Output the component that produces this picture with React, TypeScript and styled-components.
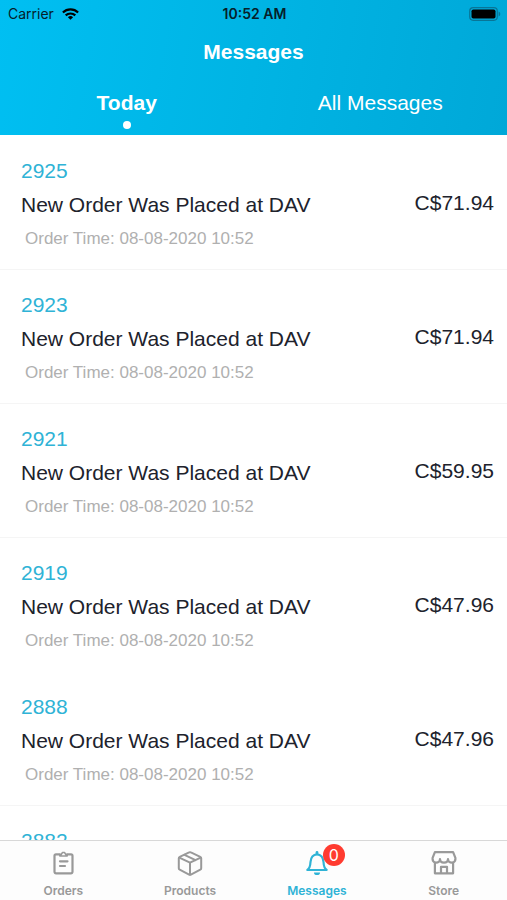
import React from "react";
import styled, { createGlobalStyle } from "styled-components";

const GlobalStyle = createGlobalStyle`
  * { box-sizing: border-box; }
  body { margin: 0; background: #fff; font-family: "Liberation Sans", Arial, sans-serif; }
  button { font: inherit; color: inherit; background: none; border: 0; padding: 0; cursor: pointer; }
  h1, h2, p, ul { margin: 0; padding: 0; font-weight: 400; }
`;

const Screen = styled.div`
  display: flex;
  flex-direction: column;
  height: 100vh;
`;

const Header = styled.header`
  flex: none;
  background: linear-gradient(100deg, #00bff2 0%, #00b4e4 50%, #00a8d8 100%);
  color: #fff;
`;

const StatusBar = styled.div`
  display: grid;
  grid-template-columns: 1fr auto 1fr;
  align-items: center;
  height: 28px;
  padding: 0 6px 0 8px;
  color: #06202a;
  font: 400 14px/28px Inter, sans-serif;
`;

const Carrier = styled.div`
  display: flex;
  align-items: center;
  gap: 8px;
`;

const Clock = styled.div`
  font-weight: 600;
`;

const Battery = styled.div`
  display: flex;
  justify-content: flex-end;
`;

const Title = styled.h1`
  height: 48px;
  font-size: 21px;
  font-weight: 700;
  line-height: 48px;
  text-align: center;
`;

const Tabs = styled.div`
  display: grid;
  grid-template-columns: 1fr 1fr;
  height: 59px;
`;

const Tab = styled.button<{ $active?: boolean }>`
  && {
    display: flex;
    flex-direction: column;
    align-items: center;
    padding-top: 13px;
    font-size: 21px;
    font-weight: ${(p) => (p.$active ? 700 : 400)};
    line-height: 28px;
  }
  &::after {
    content: "";
    width: 8px;
    height: 8px;
    margin-top: 4px;
    border-radius: 50%;
    background: ${(p) => (p.$active ? "#fff" : "transparent")};
  }
`;

const List = styled.ul`
  && {
    padding-top: 1px;
  }
  flex: 1;
  min-height: 0;
  overflow-y: auto;
  scrollbar-width: none;
  list-style: none;
`;

const Row = styled.li<{ $divided: boolean }>`
  display: flex;
  align-items: center;
  justify-content: space-between;
  height: 134px;
  padding: 5px 13px 0 21px;
  border-bottom: 1px solid ${(p) => (p.$divided ? "#f5f5f5" : "transparent")};
`;

const OrderNumber = styled.h2`
  color: #2fb3d6;
  font-size: 21px;
  line-height: 34px;
`;

const Summary = styled.p`
  color: #20222c;
  font-size: 21px;
  line-height: 34px;
`;

const OrderTime = styled.p`
  && {
    padding-left: 4px;
  }
  color: #b0b0b0;
  font-size: 17px;
  line-height: 34px;
`;

const Price = styled.div`
  padding-bottom: 4px;
  color: #20222c;
  font-size: 21px;
  line-height: 34px;
`;

const TabBar = styled.nav`
  flex: none;
  display: grid;
  grid-template-columns: repeat(4, 1fr);
  height: 60px;
  border-top: 1px solid #d8d8d8;
  background: #fdfdfd;
`;

const NavItem = styled.button<{ $active?: boolean }>`
  && {
    display: flex;
    flex-direction: column;
    align-items: center;
    padding-top: 8px;
    color: ${(p) => (p.$active ? "#2fb3d6" : "#999")};
    font: 600 12px/16px Inter, sans-serif;
  }
`;

const IconBox = styled.span`
  position: relative;
  display: flex;
  width: 28px;
  height: 28px;
  margin-bottom: 6px;
`;

const Badge = styled.span`
  position: absolute;
  top: -5px;
  left: 20px;
  width: 22px;
  height: 22px;
  border-radius: 50%;
  background: #ff3b30;
  color: #fff;
  font: 400 16px/22px Inter, sans-serif;
  text-align: center;
`;

const Glyph = ({ children }: { children: React.ReactNode }) => (
  <svg width="28" height="28" viewBox="0 0 28 28" fill="none" stroke="currentColor" strokeWidth="2.2" strokeLinecap="round" strokeLinejoin="round" aria-hidden="true">
    {children}
  </svg>
);

const OrdersIcon = () => (
  <Glyph>
    <path d="M10.800 5.300H7A1.500 1.500 0 0 0 5.500 6.800v16A1.500 1.500 0 0 0 7 24.300h15a1.500 1.500 0 0 0 1.500-1.500v-16A1.500 1.500 0 0 0 22 5.300h-3.800" />
    <path d="M10.800 5.500h1.400l1.300-2h2l1.300 2h1.400v1.500h-7.400z" strokeWidth="1.500" />
    <path d="M11 12.300h7.500M11 17h5" />
  </Glyph>
);

const ProductsIcon = () => (
  <Glyph>
    <path d="M13.100 3.400a2 2 0 0 1 1.800 0l9.400 4.400a1.500 1.500 0 0 1 .9 1.400v10.100a1.500 1.500 0 0 1-.9 1.400l-9.400 4.900a2 2 0 0 1-1.800 0l-9.400-4.900a1.500 1.500 0 0 1-.9-1.400V9.200a1.500 1.500 0 0 1 .9-1.400z" strokeWidth="2" />
    <path d="M3.300 8.700 14 13.700l10.700-5M14 13.700V25.500M8.500 5.900l11 5.200" strokeWidth="2" />
  </Glyph>
);

const BellIcon = () => (
  <Glyph>
    <path d="M4.300 21c2.600-1.700 3-4.200 3.200-8C7.800 8.500 10.200 5.300 14 5.300s6.200 3.200 6.500 7.700c.2 3.800.6 6.300 3.200 8z" />
    <path d="M14 3.400v1.400" strokeWidth="2.800" />
    <path d="M11 23.500h6a3 2.600 0 0 1-6 0z" fill="currentColor" stroke="none" />
  </Glyph>
);

const StoreIcon = () => (
  <Glyph>
    <path d="M4.900 3.200h18.200l2.300 5.600v1.600a3.300 3.300 0 0 1-3.600 3.200c-2 0-3.800-1.400-3.800-3.600 0 2.200-1.800 3.600-4 3.600s-4-1.400-4-3.600c0 2.200-1.800 3.600-3.800 3.600a3.300 3.300 0 0 1-3.600-3.200V8.800z" />
    <path d="M4.900 13.600v10.700h18.200V13.600" />
    <path d="M11 24v-6.200h6V24" />
  </Glyph>
);

const WifiIcon = () => (
  <svg width="17" height="12" viewBox="0 0 17 12" fill="none" stroke="#000" strokeWidth="2.200" aria-label="Wi-Fi">
    <path d="M.9 4.500a11 11 0 0 1 15.200 0M3.700 7.400a7 7 0 0 1 9.600 0" />
    <path d="M8.500 11.800 5.900 9.200a3.800 3.800 0 0 1 5.200 0z" fill="#000" stroke="none" />
  </svg>
);

const BatteryIcon = () => (
  <svg width="32" height="14" viewBox="0 0 32 14" aria-label="Battery full">
    <rect x=".7" y=".7" width="27.600" height="12.600" rx="3.500" fill="none" stroke="#087597" strokeWidth="1.200" />
    <rect x="2.500" y="2.500" width="24" height="9" rx="1.800" fill="#000" />
    <path d="M29.600 4.500c2.200.8 2.200 4.200 0 5z" fill="#087597" />
  </svg>
);

const orders = [
  { id: "2925", price: "C$71.94", divided: true },
  { id: "2923", price: "C$71.94", divided: true },
  { id: "2921", price: "C$59.95", divided: true },
  { id: "2919", price: "C$47.96", divided: false },
  { id: "2888", price: "C$47.96", divided: true },
  { id: "2882", price: "C$47.96", divided: true },
];

export default function App() {
  return (
    <Screen>
      <GlobalStyle />
      <Header>
        <StatusBar>
          <Carrier>
            Carrier
            <WifiIcon />
          </Carrier>
          <Clock>10:52 AM</Clock>
          <Battery>
            <BatteryIcon />
          </Battery>
        </StatusBar>
        <Title>Messages</Title>
        <Tabs role="tablist">
          <Tab role="tab" aria-selected="true" $active>Today</Tab>
          <Tab role="tab" aria-selected="false">All Messages</Tab>
        </Tabs>
      </Header>
      <List>
        {orders.map((order) => (
          <Row key={order.id} $divided={order.divided}>
            <div>
              <OrderNumber>{order.id}</OrderNumber>
              <Summary>New Order Was Placed at DAV</Summary>
              <OrderTime>Order Time: 08-08-2020 10:52</OrderTime>
            </div>
            <Price>{order.price}</Price>
          </Row>
        ))}
      </List>
      <TabBar>
        <NavItem><IconBox><OrdersIcon /></IconBox>Orders</NavItem>
        <NavItem><IconBox><ProductsIcon /></IconBox>Products</NavItem>
        <NavItem $active aria-current="page">
          <IconBox><BellIcon /><Badge>0</Badge></IconBox>
          Messages
        </NavItem>
        <NavItem><IconBox><StoreIcon /></IconBox>Store</NavItem>
      </TabBar>
    </Screen>
  );
}
